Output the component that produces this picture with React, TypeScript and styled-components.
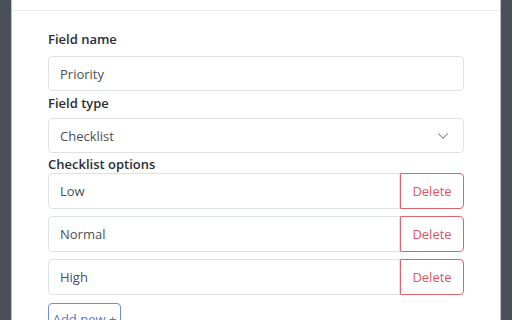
import styled, { createGlobalStyle } from 'styled-components';

const GlobalStyle = createGlobalStyle`
  html, body {
    margin: 0;
    padding: 0;
    background: #4a5057;
    font-family: 'Open Sans', 'Noto Sans', sans-serif;
  }
`;

const Backdrop = styled.div`
  height: 320px;
  overflow: hidden;
  padding-left: 11px;
`;

const ModalContent = styled.div`
  width: 488px;
  background: #fff;
  border-left: 1px solid rgba(0, 0, 0, 0.25);
  border-right: 1px solid rgba(0, 0, 0, 0.25);
  min-height: 320px;
`;

const ModalHeader = styled.div`
  height: 10px;
  border-bottom: 1px solid #e9ecef;
`;

const ModalBody = styled.div`
  padding: 18px 36px 0;
  display: flex;
  flex-direction: column;
`;

const Label = styled.label<{ $mt: number; $mb: number }>`
  display: block;
  font-size: 13px;
  line-height: 20px;
  font-weight: 600;
  color: #2b3035;
  margin-top: ${(p) => p.$mt}px;
  margin-bottom: ${(p) => p.$mb}px;
`;

const TextInput = styled.input`
  box-sizing: border-box;
  width: 100%;
  height: 35px;
  padding: 0 11px;
  border: 1px solid #dee2e6;
  border-radius: 4px;
  font-family: inherit;
  font-size: 13px;
  color: #495057;
  background: #fff;
  outline: none;
`;

const SelectBox = styled.div`
  box-sizing: border-box;
  height: 35px;
  padding: 0 14px 0 11px;
  border: 1px solid #dee2e6;
  border-radius: 4px;
  display: flex;
  align-items: center;
  justify-content: space-between;
  font-size: 13px;
  color: #495057;
`;

const OptionList = styled.div`
  display: flex;
  flex-direction: column;
  gap: 7px;
`;

const InputGroup = styled.div`
  display: flex;
  height: 36px;

  & input {
    height: 36px;
    flex: 1;
    border-top-right-radius: 0;
    border-bottom-right-radius: 0;
  }
`;

const DeleteButton = styled.button`
  width: 64px;
  box-sizing: border-box;
  border: 1px solid #e06470;
  border-radius: 0 4px 4px 0;
  background: #fff;
  color: #e05462;
  font-family: inherit;
  font-size: 13px;
  cursor: pointer;
  padding: 0;
`;

const AddButton = styled.button`
  align-self: flex-start;
  margin-top: 8px;
  height: 36px;
  width: 73px;
  box-sizing: border-box;
  border: 1px solid #6d8fd4;
  border-radius: 4px;
  background: #fff;
  color: #5672c4;
  font-family: inherit;
  font-size: 13px;
  padding: 0 0 4px;
`;

const Chevron = () => (
  <svg width="12" height="12" viewBox="0 0 16 16" fill="none">
    <path d="M2 5l6 6 6-6" stroke="#6c757d" strokeWidth="1.4" strokeLinecap="round" strokeLinejoin="round" />
  </svg>
);

const options = ['Low', 'Normal', 'High'];

export default function App() {
  return (
    <>
      <GlobalStyle />
      <Backdrop>
        <ModalContent>
          <ModalHeader />
          <ModalBody>
            <Label $mt={0} $mb={7}>Field name</Label>
            <TextInput defaultValue="Priority" />
            <Label $mt={2} $mb={5}>Field type</Label>
            <SelectBox>
              <span>Checklist</span>
              <Chevron />
            </SelectBox>
            <Label $mt={1} $mb={-1}>Checklist options</Label>
            <OptionList>
              {options.map((o) => (
                <InputGroup key={o}>
                  <TextInput defaultValue={o} />
                  <DeleteButton>Delete</DeleteButton>
                </InputGroup>
              ))}
            </OptionList>
            <AddButton>Add new +</AddButton>
          </ModalBody>
        </ModalContent>
      </Backdrop>
    </>
  );
}
